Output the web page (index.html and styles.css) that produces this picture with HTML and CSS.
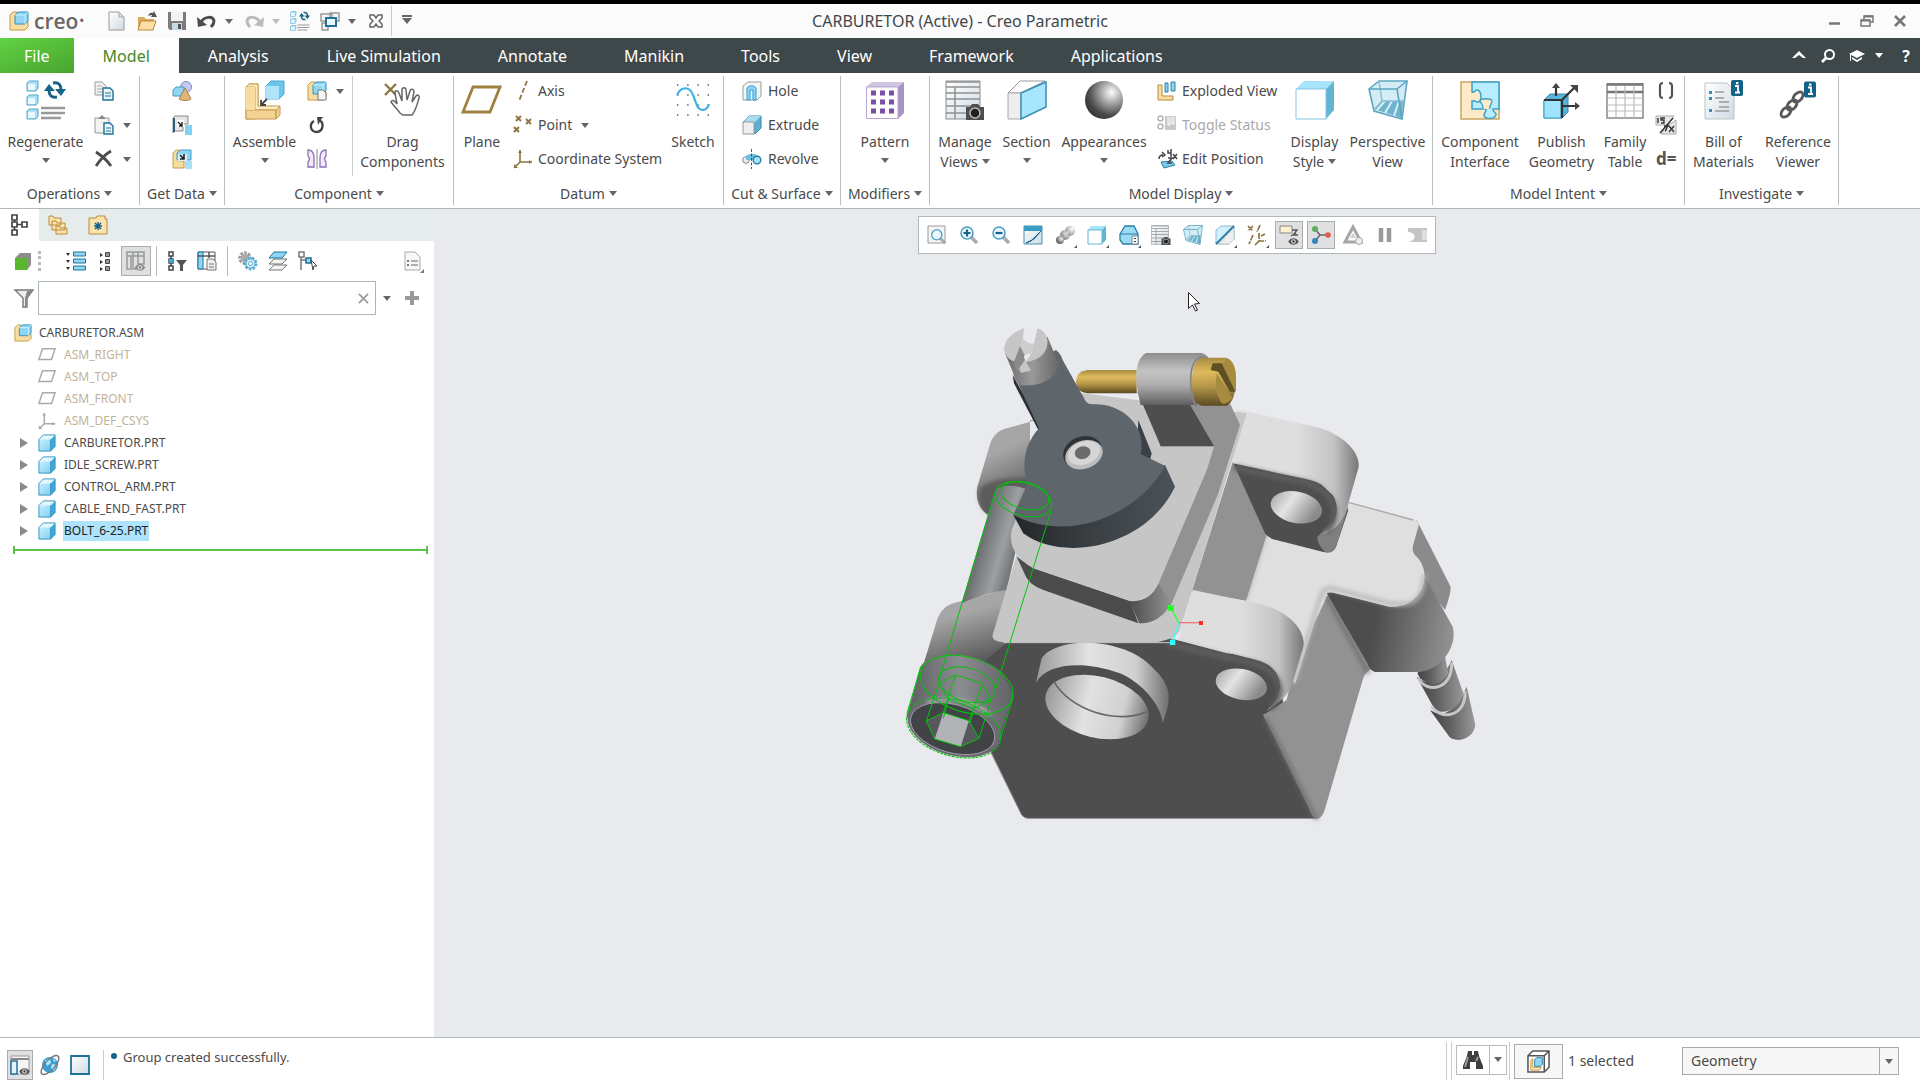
FILE: index.html
```html
<!DOCTYPE html>
<html lang="en">
<head>
<meta charset="utf-8">
<title>CARBURETOR (Active) - Creo Parametric</title>
<link rel="stylesheet" href="styles.css">
</head>
<body>
<svg class="defs" aria-hidden="true">
  <defs>
    <linearGradient id="gBlue" x1="0" y1="0" x2="1" y2="1"><stop offset="0" stop-color="#c9f0ff"/><stop offset="1" stop-color="#7fcdf0"/></linearGradient>
    <linearGradient id="gPale" x1="0" y1="0" x2="1" y2="1"><stop offset="0" stop-color="#fff"/><stop offset="1" stop-color="#cfdbe4"/></linearGradient>
    <radialGradient id="gBall" cx=".7" cy=".3" r=".8"><stop offset="0" stop-color="#fff"/><stop offset=".35" stop-color="#a8a8a8"/><stop offset=".75" stop-color="#4b4b4b"/><stop offset="1" stop-color="#333"/></radialGradient>
  </defs>
  <symbol id="part" viewBox="0 0 20 20"><path d="M1 6l5-5h13l-5 5z" fill="#e2f7ff"/><path d="M14 6l5-5v13l-5 5z" fill="#3ba9dc"/><path d="M1 6h13v13H1z" fill="url(#gBlue)"/><path d="M1 6l5-5h13v13l-5 5H1zM14 6v13" fill="none" stroke="#2f8fbd"/></symbol>
  <symbol id="asm" viewBox="0 0 20 20"><path d="M1 4l3-3h4v10h11v5l-3 3H1z" fill="#f8dda2" stroke="#c79a4b"/><path d="M6 4l3-3h10v9l-3 3H6z" fill="#8fd6f5" stroke="#2f8fbd"/><path d="M6 4h10v9M16 4l3-3" fill="none" stroke="#c9f0ff"/></symbol>
  <symbol id="plane" viewBox="0 0 20 20"><path d="M5 3h14l-4 12H1z" fill="none" stroke="#a9a9a9" stroke-width="1.6"/></symbol>
  <symbol id="csys" viewBox="0 0 20 20"><path d="M7 1v12h12M7 13l-6 6" fill="none" stroke="currentColor" stroke-width="1.6"/><path d="M5 4l2-3 2 3zM16 11l3 2-3 2zM1 15v4h4z" fill="currentColor"/></symbol>
  <symbol id="regen" viewBox="0 0 40 40"><g fill="#a8e2f8" stroke="#56a5c8"><path d="M1 3l2-2h9v7l-2 3H1zM1 17l2-2h9v7l-2 3H1zM1 31l2-2h9v7l-2 3H1z"/></g><path d="M2 4h7v6H2zM2 18h7v6H2zM2 32h7v6H2z" fill="#fff" opacity=".75"/><path d="M15 28h24M15 33h24M15 38h20" stroke="#999" stroke-width="2.4"/><path d="M27 3c6-1 8 2 8 7M31 17c-6 1-8-2-8-7" fill="none" stroke="#17648a" stroke-width="3"/><path d="M29 9h11l-5 7zM18 11h11l-6-7z" fill="#17648a"/></symbol>
  <symbol id="camtable" viewBox="0 0 40 40"><path d="M1 1h34v38H1z" fill="url(#gPale)" stroke="#8b8b8b"/><path d="M1 2h34M1 7h34M1 13h34M1 19h34M1 26h34M1 33h34M10 7v32" fill="none" stroke="#909090" stroke-width="1.5"/><path d="M21 27h4l2-3h6l2 3h4v13H21z" fill="#4d4d4d"/><circle cx="30" cy="33" r="5" fill="#1f1f1f" stroke="#bbb" stroke-width="1.5"/></symbol>
  <symbol id="persp" viewBox="0 0 40 40"><path d="M1 9l10-8h28l-5 38-28-8z" fill="#d3edf7" stroke="#5da5c0" stroke-width="1.6"/><path d="M6 29l8-8h21l-1 17z" fill="#6fb3cd"/><path d="M17 21l-8 9M24 21l-7 12M31 21l-5 15" stroke="#d7eff8" stroke-width="2"/><path d="M11 1l3 20-8 9M14 21h22" fill="none" stroke="#8abed0" stroke-width="1.4"/><path d="M1 9h28l5 30M29 9l10-8" fill="none" stroke="#5da5c0" stroke-width="1.6"/></symbol>
  <symbol id="mag" viewBox="0 0 20 20"><path d="M12 12l6 6" stroke="#aaa" stroke-width="3.5"/><circle cx="8" cy="8" r="6" fill="#e9f7fd" stroke="#4b9cc4" stroke-width="1.5"/></symbol>
  <symbol id="eye" viewBox="0 0 12 8"><path d="M0 4c3-5 9-5 12 0-3 5-9 5-12 0z" fill="#555"/><circle cx="6" cy="4" r="2.6" fill="#ddd"/><circle cx="6" cy="4" r="1.3" fill="#333"/></symbol>
  <symbol id="info" viewBox="0 0 12 16"><rect width="12" height="16" rx="2" fill="#126186"/><path d="M4 6h3v6M4 12.5h5" fill="none" stroke="#fff" stroke-width="1.8"/><path d="M5 2h2.4v2.200H5z" fill="#fff"/></symbol>
</svg>

<header class="titlebar">
  <div class="brand"><svg class="i20"><use href="#asm"/></svg><span>creo</span><sup>•</sup></div>
  <nav class="quick" aria-label="Quick access">
    <button aria-label="New"><svg class="i20" viewBox="0 0 20 20"><path d="M2 1h10l5 5v13H2z" fill="url(#gPale)" stroke="#9a9a9a"/><path d="M12 1v5h5z" fill="#cfe3ee" stroke="#aaa"/></svg></button>
    <button aria-label="Open"><svg class="i20" viewBox="0 0 20 20"><path d="M1 6h6l2 2h8v11H1z" fill="#d8ab5c"/><path d="M1 19l3-9h15l-3 9z" fill="#fbe0a6" stroke="#b98a3c"/><path d="M11 5c1-3 3-4 5-3l1-2 3 6h-6l1-2c-1 0-2 0-4 1z" fill="#555"/></svg></button>
    <button aria-label="Save"><svg class="i20" viewBox="0 0 20 20"><path d="M1 1h18v18H3l-2-2z" fill="#7b7b7b"/><path d="M4 1h12v9H4z" fill="#f3f3f3"/><path d="M5 12h10v7H5z" fill="#c3dbe7"/><path d="M11 13h3v5h-3z" fill="#555"/></svg></button>
    <button class="gap" aria-label="Undo"><svg class="i20" viewBox="0 0 20 20"><path d="M4 11c4-6 12-6 13-1 0 3-1 4-3 6" fill="none" stroke="#4c4c4c" stroke-width="3"/><path d="M0 6l1 10 9-2z" fill="#4c4c4c"/></svg><i class="caret"></i></button>
    <button class="gap dis" aria-label="Redo"><svg class="i20" viewBox="0 0 20 20"><path d="M16 11C12 5 4 5 3 10c0 3 1 4 3 6" fill="none" stroke="#bbb" stroke-width="3"/><path d="M20 6l-1 10-9-2z" fill="#bbb"/></svg><i class="caret"></i></button>
    <button aria-label="Regenerate model"><svg class="i20"><use href="#regen"/></svg></button>
    <button class="gap" aria-label="Windows"><svg class="i20" viewBox="0 0 20 20"><path d="M10 2h9v8h-9zM1 3h11v7H1zM2 12h6v7H2z" fill="#f6f6f6" stroke="#999" stroke-width="1.500"/><path d="M6 7h10v8H6z" fill="#eaf8ff" stroke="#1f7298" stroke-width="2"/></svg><i class="caret"></i></button>
    <button aria-label="Close window"><svg class="i20" viewBox="0 0 20 20"><path d="M4 4h4l2 3 2-3h4v3l-3 3 3 3v3h-4l-2-3-2 3H4v-3l3-3-3-3z" fill="#fff" stroke="#666" stroke-width="1.500"/></svg></button>
    <button class="custom" aria-label="Customize"><i class="caret bar"></i></button>
  </nav>
  <h1>CARBURETOR (Active) - Creo Parametric</h1>
  <div class="winctl">
    <button aria-label="Minimize"><svg viewBox="0 0 14 14"><path d="M2 9.500h11" stroke="#777" stroke-width="2.500"/></svg></button>
    <button aria-label="Restore"><svg viewBox="0 0 14 14"><path d="M4 5V2h9v6h-3M1 6h9v6H1z" fill="none" stroke="#777" stroke-width="1.500"/><path d="M4 2.500h9M1 6.500h9" stroke="#777" stroke-width="2"/></svg></button>
    <button aria-label="Close"><svg viewBox="0 0 14 14"><path d="M2 2l10 10M12 2L2 12" stroke="#777" stroke-width="2.600"/></svg></button>
  </div>
</header>

<nav class="tabs" aria-label="Ribbon tabs">
  <button class="file">File</button><button class="on">Model</button><button>Analysis</button><button>Live Simulation</button><button>Annotate</button><button>Manikin</button><button>Tools</button><button>View</button><button>Framework</button><button>Applications</button>
  <div class="tabctl">
    <button aria-label="Collapse ribbon"><svg viewBox="0 0 16 16"><path d="M1 10l7-7 7 7-3 0-4-3-4 3z" fill="#fff"/></svg></button>
    <button aria-label="Search"><svg viewBox="0 0 16 16"><circle cx="9.500" cy="6.500" r="4.500" fill="none" stroke="#fff" stroke-width="2"/><path d="M6 10l-4 4" stroke="#fff" stroke-width="2.600"/></svg></button>
    <button class="learn" aria-label="Learning"><svg viewBox="0 0 16 16"><path d="M0 6l8-4 8 4-8 4z" fill="#fff"/><path d="M3 9l5 3 5-3v2l-5 3-5-3zM1 7h1v6H1z" fill="#fff"/></svg><i class="caret"></i></button>
    <button class="q" aria-label="Help">?</button>
  </div>
</nav>

<section class="ribbon" aria-label="Model ribbon">
  <div class="group"><div class="tools ops">
    <button class="big"><svg><use href="#regen"/></svg><span>Regenerate</span><i class="caret"></i></button>
    <div class="col">
      <button aria-label="Copy"><svg class="i20" viewBox="0 0 20 20"><path d="M1 1h7l4 4v9H1z" fill="#f2f2f2" stroke="#999"/><path d="M3 5h5M3 8h5M3 11h5" stroke="#aaa"/><path d="M9 7h7l3 3v9H9z" fill="#e9f7fd" stroke="#1f7298" stroke-width="1.400"/><path d="M11 12h6M11 15h6" stroke="#1f7298"/></svg></button>
      <button aria-label="Paste"><svg class="i20" viewBox="0 0 20 20"><path d="M1 3h14v15H1z" fill="#f2f2f2" stroke="#999"/><path d="M4 4l4-4 4 4z" fill="#888"/><path d="M10 8h6l3 3v8h-9z" fill="#e9f7fd" stroke="#1f7298" stroke-width="1.400"/><path d="M12 13h5M12 16h5" stroke="#1f7298"/></svg><i class="caret"></i></button>
      <button aria-label="Delete"><svg class="i20" viewBox="0 0 20 20"><path d="M2 3c6 4 11 8 15 14M17 2C10 6 6 11 2 17" fill="none" stroke="#4c4c4c" stroke-width="2.800"/></svg><i class="caret"></i></button>
    </div></div><button class="name">Operations<i class="caret"></i></button></div>

  <div class="group"><div class="tools get"><div class="col">
      <button aria-label="User-defined feature"><svg class="i20" viewBox="0 0 20 20"><circle cx="14" cy="6" r="5.500" fill="#c4c8f0" stroke="#8288c6"/><path d="M1 9l3-3h8v9H1z" fill="#8fd6f5" stroke="#4a9dbf"/><path d="M13 7l6 11c-3 2-9 2-12 0z" fill="#dcb67a" stroke="#a9823f"/></svg></button>
      <button aria-label="Copy geometry"><svg class="i20" viewBox="0 0 20 20"><path d="M1 3l2-2h13v8h-5v7H3l-2 2z" fill="#e5e5e5" stroke="#888"/><path d="M1 3h2v14H1z" fill="#2f5f7a"/><path d="M5 5h7v7H5z" fill="#fff"/><path d="M6 7l4 4M10 7v4H7" stroke="#222" stroke-width="1.400" fill="none"/><path d="M13 10h7v10h-7z" fill="#7ed3f5"/></svg></button>
      <button aria-label="Shrinkwrap"><svg class="i20" viewBox="0 0 20 20"><path d="M1 4l3-3h3v11h5v7H1z" fill="#f8dda2" stroke="#c79a4b"/><path d="M5 4l3-3h11v10H5z" fill="#8fd6f5" stroke="#4a9dbf"/><path d="M6 5h9v7H6z" fill="#d8f2fd"/><path d="M8 6l4 4M12 5v5H8" stroke="#222" stroke-width="1.600" fill="none"/><path d="M13 12h7v8h-7z" fill="#a5e2fb"/></svg></button>
    </div></div><button class="name">Get Data<i class="caret"></i></button></div>

  <div class="group"><div class="tools cmp">
    <button class="big"><svg viewBox="0 0 40 40"><path d="M1 7l3-3h9v23l-3 12H1z" fill="#f3d294" stroke="#c79a4b"/><path d="M1 30h30l4-4H13V4H4L1 7h9v23" fill="#fdecc5" stroke="#c79a4b"/><path d="M1 30h30v9H1zM31 30l4-4v9l-4 4z" fill="#f3d294" stroke="#c79a4b"/><path d="M1 7h9v23H1z" fill="#f8dda2"/><path d="M21 6l5-5h13v13l-5 5H21z" fill="#6cc6ec" stroke="#4aa9d2"/><path d="M21 6h13v13H21z" fill="#aee5fb"/><path d="M22 19l-6 6M16 20v5h5" fill="none" stroke="#444" stroke-width="1.800"/></svg><span>Assemble</span><i class="caret"></i></button>
    <div class="col">
      <button aria-label="Create"><svg class="i20" viewBox="0 0 20 20"><use href="#asm"/><path d="M11 9h5l3 3v7h-8z" fill="#f4f7f9" stroke="#777"/></svg><i class="caret"></i></button>
      <button aria-label="Repeat"><svg class="i20" viewBox="0 0 20 20"><path d="M7 6c-5 3-4 11 3 11 7-1 7-10 2-12" fill="none" stroke="#444" stroke-width="2.400"/><path d="M10 2h7l-2 1-4 7z" fill="#444"/></svg></button>
      <button aria-label="Mirror"><svg class="i20" viewBox="0 0 20 20"><path d="M1 1c5 0 6 5 6 8v9H1v-5c2-2 2-4 0-6zM19 1c-5 0-6 5-6 8v9h6v-5c-2-2-2-4 0-6z" fill="#f1eaf8" stroke="#8f6fb8" stroke-width="1.300"/><path d="M10 0v20" stroke="#888"/></svg></button>
    </div>
    <button class="big ruled"><svg viewBox="0 0 40 40"><path d="M2 4l11 11M13 4L2 15" stroke="#8f7440" stroke-width="2.400"/><path d="M17 33c-3-4-6-7-9-11 1-3 4-1 6 2L12 13c0-3 3-3 4 0l3 8V10c0-3 4-3 4 0l1 10 3-9c1-3 4-2 4 1l-2 10 4-6c2-2 4 0 3 2-2 7-3 12-7 17H20z" fill="#fff" stroke="#666" stroke-width="1.500"/></svg><span>Drag<br>Components</span></button>
    </div><button class="name">Component<i class="caret"></i></button></div>

  <div class="group"><div class="tools dat">
    <button class="big"><svg viewBox="0 0 40 40"><path d="M11 7h27L28 32H1z" fill="none" stroke="#a0803e" stroke-width="2.800"/></svg><span>Plane</span></button>
    <div class="col">
      <button><svg class="i20" viewBox="0 0 20 20"><path d="M14 0L6 20" stroke="#8f7440" stroke-width="1.800" stroke-dasharray="5 2.500"/></svg>Axis</button>
      <button><svg class="i20" viewBox="0 0 20 20"><path d="M3 1l5 5M8 1L3 6M13 4l5 5M18 4l-5 5M1 12l5 5M6 12l-5 5" stroke="#8f7440" stroke-width="1.900"/></svg>Point<i class="caret"></i></button>
      <button><svg class="i20 tan"><use href="#csys"/></svg>Coordinate System</button>
    </div>
    <button class="big"><svg viewBox="0 0 40 40"><path d="M4 5h33M4 15h33M4 25h33M4 35h33" stroke="#555" stroke-width="1.400" stroke-dasharray="1.400 8.800"/><path d="M4 15C8 6 17 6 20 15l3 8c3 10 11 8 13 1" fill="none" stroke="#3fb1e6" stroke-width="2.200"/></svg><span>Sketch</span></button>
    </div><button class="name">Datum<i class="caret"></i></button></div>

  <div class="group"><div class="tools cut"><div class="col">
      <button><svg class="i20" viewBox="0 0 20 20"><path d="M1 5l5-4h13v14l-4 4H1z" fill="#f4f4f4" stroke="#999"/><path d="M5 19V7c2-3 7-3 9 0v12h-3V9H8v10z" fill="#8fd6f5" stroke="#2a9fd4"/></svg>Hole</button>
      <button><svg class="i20" viewBox="0 0 20 20"><path d="M1 7l6-6h12v12l-6 6z" fill="#5aafd2" stroke="#3e86a5"/><path d="M1 7l6-6h12l-6 6z" fill="#a8dcf0"/><path d="M1 7h11v12H1z" fill="#f0f0f0" stroke="#999"/></svg>Extrude</button>
      <button><svg class="i20" viewBox="0 0 20 20"><circle cx="4" cy="11" r="3.300" fill="#eee" stroke="#888"/><path d="M4 7c4-3 8-3 12 0v4H4z" fill="#6ebfe0"/><circle cx="15" cy="11" r="3.800" fill="#a5e2fb" stroke="#2a7ea5" stroke-width="1.400"/><path d="M9.500 0v20" stroke="#555" stroke-dasharray="3 1.500"/></svg>Revolve</button>
    </div></div><button class="name">Cut &amp; Surface<i class="caret"></i></button></div>

  <div class="group"><div class="tools mod">
    <button class="big"><svg viewBox="0 0 40 40"><path d="M1 7l6-5h32l-6 5z" fill="#cfc4e2"/><path d="M33 7l6-5v31l-6 6z" fill="#a793c7"/><path d="M1.500 7h31.500v31.500H1.500z" fill="#fff" stroke="#b7a7d0"/><path d="M6 13h24M6 22h24M6 31h24" stroke="#7b4fa3" stroke-width="5" stroke-dasharray="5 4"/></svg><span>Pattern</span><i class="caret"></i></button>
    </div><button class="name">Modifiers<i class="caret"></i></button></div>

  <div class="group"><div class="tools dsp">
    <button class="big"><svg><use href="#camtable"/></svg><span>Manage<br>Views<i class="caret"></i></span></button>
    <button class="big"><svg viewBox="0 0 40 40"><path d="M1 13L13 1h25L14 13z" fill="#fff" stroke="#999"/><path d="M1 13h13v26H1z" fill="#eee" stroke="#aaa"/><path d="M14 13L39 2v25L14 39z" fill="#a8e6fd" stroke="#3b8fb3" stroke-width="1.500"/></svg><span>Section</span><i class="caret"></i></button>
    <button class="big"><svg viewBox="0 0 40 40"><circle cx="20" cy="20" r="19" fill="url(#gBall)"/></svg><span>Appearances</span><i class="caret"></i></button>
    <div class="col">
      <button><svg class="i20" viewBox="0 0 20 20"><path d="M1 4h4v11h11v4H1z" fill="#f8dda2" stroke="#b98a3c"/><path d="M8 2h3v9H8zM14 1h4v9h-4z" fill="#8fd6f5" stroke="#2a7ea5"/></svg>Exploded View</button>
      <button class="dis"><svg class="i20" viewBox="0 0 20 20"><circle cx="3.500" cy="3.500" r="2.500" fill="none" stroke="#b5b5b5" stroke-width="1.500"/><circle cx="3.500" cy="11.500" r="2.500" fill="none" stroke="#b5b5b5" stroke-width="1.500"/><path d="M8 1h11v14H8z" fill="#c9c9c9"/><path d="M11 2v8h2V2M15 2v7h2V2" fill="none" stroke="#fff"/></svg>Toggle Status</button>
      <button><svg class="i20" viewBox="0 0 20 20"><path d="M4 13l11-1 3 4-11 3z" fill="#7ccbea" stroke="#2a7ea5"/><path d="M2 10c0-3 1-4 4-4M5 3l3 3-3 2M11 1v3h3M14 0v8M16 5l4 5M20 5l-4 5M11 9h4l-4 5h4" fill="none" stroke="#444" stroke-width="1.500"/></svg>Edit Position</button>
    </div>
    <button class="big"><svg viewBox="0 0 40 40"><path d="M1 9l8-8h30l-8 8z" fill="#a5e4fb"/><path d="M31 9l8-8v29l-8 9z" fill="#62b5d2"/><path d="M1 9h30v30H1z" fill="#fff" stroke="#81c7e0"/></svg><span>Display<br>Style<i class="caret"></i></span></button>
    <button class="big"><svg><use href="#persp"/></svg><span>Perspective<br>View</span></button>
    </div><button class="name">Model Display<i class="caret"></i></button></div>

  <div class="group"><div class="tools int">
    <button class="big"><svg viewBox="0 0 40 40"><path d="M1 2h38v37H1z" fill="#fdebc8" stroke="#c9a567" stroke-width="1.500"/><path d="M12 2h27v27h-6c-1 3 4 3 3 6-2 5-12 4-12 0 0-3 3-3 2-6H12v-8c4-1 5 3 8 0 2-3 1-11-3-11-3 0-2 3-5 2z" fill="#b8ecff" stroke="#3ba0c9" stroke-width="1.500"/><path d="M26 29c1-4-2-5-3-8 0-3 12-3 12 0 0 3-3 4-2 8" fill="#fdebc8" stroke="#3ba0c9" stroke-width="1.300" transform="translate(-3 0)"/></svg><span>Component<br>Interface</span></button>
    <button class="big"><svg viewBox="0 0 40 40"><path d="M2 20l6-6h18v18l-6 6H2z" fill="#54b6dc" stroke="#3e86a5"/><path d="M2 20h17v18H2z" fill="#9fe4fc" stroke="#3ba0c9"/><path d="M2 20h18v18M20 20L33 7M14 16V4M20 26h16" fill="none" stroke="#333" stroke-width="2.200"/><path d="M10 8l4-5 4 5zM28 5h8v8zM33 22l5 4-5 4z" fill="#444"/></svg><span>Publish<br>Geometry</span></button>
    <button class="big"><svg viewBox="0 0 40 40"><path d="M2 4h36v34H2z" fill="#fff" stroke="#888" stroke-width="1.500"/><path d="M2 4.500h36M2 12h36" stroke="#777" stroke-width="2.400"/><path d="M2 18h36M2 25h36M2 31h36M11 6v32M20 6v32M29 6v32" stroke="#bbb" stroke-width="1.200"/></svg><span>Family<br>Table</span></button>
    <div class="col">
      <button aria-label="Parameters"><svg class="i20" viewBox="0 0 20 20"><path d="M7 2Q4 2 4 5v9q0 3 3 3M13 2q3 0 3 3v9q0 3-3 3" fill="none" stroke="#555" stroke-width="2.200"/></svg></button>
      <button aria-label="Switch dimensions"><svg class="i20" viewBox="0 0 20 20"><path d="M0 1h18l-6 9H0zM20 5v14H5l5-7z" fill="#e8e8e8" stroke="#aaa"/><path d="M2 3v5M9 3H5v2h3v3H5M17 3L4 18M13 8c-2 0-2 8-4 8M8 11h5M13 11l5 6M18 11l-5 6" fill="none" stroke="#333" stroke-width="1.400"/></svg></button>
      <button aria-label="Relations"><b>d=</b></button>
    </div></div><button class="name">Model Intent<i class="caret"></i></button></div>

  <div class="group"><div class="tools inv">
    <button class="big"><svg viewBox="0 0 40 40"><path d="M1 3h22l7 7v29H1z" fill="url(#gPale)" stroke="#c0c0c0"/><path d="M11 12h9M11 18h9M15 22h10M15 27h10M11 31h14" stroke="#999" stroke-width="1.500"/><path d="M5 11h3v3H5zM5 17h3v3H5zM5 29h3v3H5z" fill="#3390b8"/><use href="#info" x="27" width="12" height="16"/></svg><span>Bill of<br>Materials</span></button>
    <button class="big"><svg viewBox="0 0 40 40"><g fill="none" stroke="#595959" stroke-width="2.800"><ellipse cx="8" cy="32" rx="6" ry="3.800" transform="rotate(-45 8 32)"/><ellipse cx="14" cy="25" rx="6" ry="3.800" transform="rotate(-45 14 25)"/><ellipse cx="20" cy="17" rx="6" ry="3.800" transform="rotate(-45 20 17)"/></g><use href="#info" x="26" y="1" width="12" height="17"/></svg><span>Reference<br>Viewer</span></button>
    </div><button class="name">Investigate<i class="caret"></i></button></div>
</section>

<main class="work">
  <aside class="side">
    <div class="sidetabs">
      <button class="on" aria-label="Model tree"><svg class="i20" viewBox="0 0 20 20"><path d="M2 0h5v5H2zM2 7h5v5H2zM2 15h5v5H2zM12 7h5v5h-5zM4.500 5v2M4.500 12v3M7 9.500h5" fill="none" stroke="#444" stroke-width="1.700"/></svg></button>
      <button aria-label="Folders"><svg class="i20" viewBox="0 0 20 20"><g fill="#fbe3ad" stroke="#b98a3c"><path d="M1 1h4l1 2h7v7H1zM4 6h4l1 2h8v7H4zM8 11h3l1 2h7v6H8z"/></g></svg></button>
      <button aria-label="Favorites"><svg class="i20" viewBox="0 0 20 20"><path d="M1 3h7l1-2h8v3h2v15H1z" fill="#fbe3ad" stroke="#b98a3c"/><path d="M10 7v8M6 11h8M7 8l6 6M13 8l-6 6" stroke="#17648a" stroke-width="1.500"/></svg></button>
    </div>
    <div class="treebar">
      <button aria-label="Model display"><svg class="i20" viewBox="0 0 20 20"><path d="M2 7l5-5h11v12l-4 5H2z" fill="#8d8d8d"/><path d="M2 7h12v12H2z" fill="#57b72f"/></svg></button>
      <span class="grip"></span>
      <button aria-label="Expand all"><svg class="i20" viewBox="0 0 20 20"><g fill="#8fd6f5" stroke="#1f7298"><path d="M7.500 1h12v4h-12zM7.500 8h12v4h-12zM7.500 15h12v4h-12z"/></g><path d="M0 2h4L2 5zM0 9h4l-2 3zM0 16h4l-2 3z" fill="#333"/></svg></button>
      <button aria-label="Collapse all"><svg class="i20" viewBox="0 0 20 20"><g fill="#999" stroke="#444"><path d="M9.500 1.500h4v4h-4zM9.500 8.500h4v4h-4zM9.500 15.500h4v4h-4z"/></g><path d="M4 2v4l3-2zM4 9v4l3-2zM4 16v4l3-2z" fill="#333"/></svg></button>
      <button class="down" aria-label="Tree columns"><svg class="i20" viewBox="0 0 20 20"><path d="M1 1h17v4H1zM1 5h4v13H1zM7 1v17h3M12 1v12h6V5" fill="none" stroke="#999" stroke-width="1.500"/><use href="#eye" x="8" y="13" width="12" height="7" opacity=".6"/></svg></button>
      <span class="sep"></span>
      <button aria-label="Tree filters"><svg class="i20" viewBox="0 0 20 20"><path d="M2 1h4v4H2zM2 8h4v4H2zM2 15h4v4H2zM4 5v3M4 12v3" fill="none" stroke="#444" stroke-width="1.500"/><path d="M2 8h4v4H2z" fill="#3ba9dc"/><path d="M9 9h11l-4 5v6h-3v-6z" fill="#555"/></svg></button>
      <button aria-label="Columns setup"><svg class="i20" viewBox="0 0 20 20"><path d="M1 1h17v17H1z" fill="#fff" stroke="#555"/><path d="M1 1h5v17H1z" fill="#8fd6f5" stroke="#1f7298"/><path d="M1 5h17M12 1v6" stroke="#555" stroke-width="1.500"/><path d="M10 8h6l3 3v8h-9z" fill="#eee" stroke="#777"/><path d="M12 13h5M12 16h5" stroke="#777"/></svg></button>
      <span class="sep"></span>
      <button aria-label="Settings"><svg class="i20" viewBox="0 0 20 20"><circle cx="7" cy="7" r="5" fill="none" stroke="#999" stroke-width="3.500" stroke-dasharray="2.500 1.200"/><circle cx="7" cy="7" r="4" fill="#aaa"/><circle cx="12.500" cy="12.500" r="5.500" fill="#e4f5fd" stroke="#57a9d0" stroke-width="2.800" stroke-dasharray="2.500 1.300"/><circle cx="12.500" cy="12.500" r="4.500" fill="#d5effa" stroke="#57a9d0"/><circle cx="12.500" cy="12.500" r="2" fill="#fff" stroke="#57a9d0"/></svg></button>
      <button aria-label="Layers"><svg class="i20" viewBox="0 0 20 20"><g stroke="#777" fill="#f4f4f4"><path d="M1 19l5-5h13l-5 5zM1 13l5-5h13l-5 5z"/></g><path d="M1 7l5-6h13l-5 6z" fill="#8fd6f5" stroke="#1f7298"/></svg></button>
      <button aria-label="Select in tree"><svg class="i20" viewBox="0 0 20 20"><path d="M1 1h5v5H1zM3 6v13M3 9h5" fill="none" stroke="#777" stroke-width="1.500"/><path d="M8 7h5v5H8z" fill="#8fd6f5" stroke="#1f7298" stroke-width="1.500"/><path d="M13 9l6 6-3 0-1 4z" fill="#fff" stroke="#444"/></svg></button>
      <button class="last" aria-label="Tree settings"><svg class="i20" viewBox="0 0 20 20"><path d="M1 1h10l5 5v13H1z" fill="#f7f7f7" stroke="#aaa"/><path d="M7 10h7M7 14h7" stroke="#999" stroke-width="1.500"/><path d="M3 9h2v2H3zM3 13h2v2H3zM20 18v4h-4z" fill="#777"/></svg></button>
    </div>
    <div class="filter">
      <svg class="i20" viewBox="0 0 20 20"><path d="M1 2h18l-6 8v9H9v-9z" fill="#f0f0f0" stroke="#777" stroke-width="1.400"/><path d="M13 3h5l-5 7v8h-2v-8z" fill="#888"/></svg>
      <div class="box"><input type="text" aria-label="Filter tree"><button aria-label="Clear"><svg viewBox="0 0 12 12"><path d="M1 1l10 10M11 1L1 11" stroke="#999" stroke-width="1.800"/></svg></button></div>
      <button aria-label="Filter options"><i class="caret"></i></button>
      <button class="plus" aria-label="Add"><svg viewBox="0 0 14 14"><path d="M7 0v14M0 7h14" stroke="#999" stroke-width="4"/></svg></button>
    </div>
    <ul class="tree">
      <li class="root"><svg><use href="#asm"/></svg><span>CARBURETOR.ASM</span></li>
      <li class="datum"><svg><use href="#plane"/></svg><span>ASM_RIGHT</span></li>
      <li class="datum"><svg><use href="#plane"/></svg><span>ASM_TOP</span></li>
      <li class="datum"><svg><use href="#plane"/></svg><span>ASM_FRONT</span></li>
      <li class="datum"><svg><use href="#csys"/></svg><span>ASM_DEF_CSYS</span></li>
      <li><button class="arrow" aria-label="Expand"></button><svg><use href="#part"/></svg><span>CARBURETOR.PRT</span></li>
      <li><button class="arrow" aria-label="Expand"></button><svg><use href="#part"/></svg><span>IDLE_SCREW.PRT</span></li>
      <li><button class="arrow" aria-label="Expand"></button><svg><use href="#part"/></svg><span>CONTROL_ARM.PRT</span></li>
      <li><button class="arrow" aria-label="Expand"></button><svg><use href="#part"/></svg><span>CABLE_END_FAST.PRT</span></li>
      <li><button class="arrow" aria-label="Expand"></button><svg><use href="#part"/></svg><span class="sel">BOLT_6-25.PRT</span></li>
    </ul>
    <div class="insert"></div>
  </aside>

  <section class="view" aria-label="Graphics area">
    <svg class="model" viewBox="434 209 1486 828" role="img" aria-label="Carburetor assembly">
      <defs>
        <linearGradient id="mHole" gradientTransform="rotate(15)"><stop offset="0" stop-color="#a2a2a2"/><stop offset=".45" stop-color="#e4e4e4"/><stop offset="1" stop-color="#8b8b8b"/></linearGradient>
        <linearGradient id="mRing"><stop offset="0" stop-color="#999"/><stop offset=".4" stop-color="#e2e2e2"/><stop offset=".75" stop-color="#d0d0d0"/><stop offset="1" stop-color="#6e6e6e"/></linearGradient>
        <linearGradient id="mLug"><stop offset=".5" stop-color="#dedede"/><stop offset=".8" stop-color="#c4c4c4"/><stop offset="1" stop-color="#777"/></linearGradient>
        <linearGradient id="mBoss" x1="600" y1="900" x2="960" y2="960" gradientUnits="userSpaceOnUse"><stop offset=".35" stop-color="#4d4d4d"/><stop offset="1" stop-color="#929292"/></linearGradient>
        <linearGradient id="mTube"><stop offset="0" stop-color="#444"/><stop offset=".4" stop-color="#5c5c5c"/><stop offset="1" stop-color="#999"/></linearGradient>
        <linearGradient id="mGold" x2="0" y2="1"><stop offset="0" stop-color="#a88b40"/><stop offset=".3" stop-color="#debb5d"/><stop offset=".6" stop-color="#b5964a"/><stop offset="1" stop-color="#594a20"/></linearGradient>
        <linearGradient id="mClamp" x2="0" y2="1"><stop offset="0" stop-color="#8d8d8d"/><stop offset=".35" stop-color="#c4c4c4"/><stop offset=".6" stop-color="#b0b0b0"/><stop offset="1" stop-color="#5f5f5f"/></linearGradient>
        <linearGradient id="mArm"><stop offset="0" stop-color="#23272a"/><stop offset=".5" stop-color="#3b4044"/><stop offset="1" stop-color="#4b525a"/></linearGradient>
        <linearGradient id="mLL" x2=".3" y2="1"><stop offset=".4" stop-color="#a6a6a6"/><stop offset="1" stop-color="#555"/></linearGradient>
        <linearGradient id="mShaft" x1="250" y1="700" x2="370" y2="735" gradientUnits="userSpaceOnUse"><stop offset="0" stop-color="#5e6063"/><stop offset=".7" stop-color="#9da0a3"/><stop offset="1" stop-color="#777a7d"/></linearGradient>
        <linearGradient id="mHead"><stop offset="0" stop-color="#5c5e60"/><stop offset=".5" stop-color="#8a8c8f"/><stop offset="1" stop-color="#606265"/></linearGradient>
        <linearGradient id="mKnob"><stop offset="0" stop-color="#6b6b6b"/><stop offset=".5" stop-color="#9a9a9a"/><stop offset="1" stop-color="#666"/></linearGradient>
        <linearGradient id="mCorner"><stop offset="0" stop-color="#4b4b4b"/><stop offset="1" stop-color="#929292"/></linearGradient>
        <filter id="soft" x="-20%" y="-20%" width="140%" height="140%"><feGaussianBlur stdDeviation="6"/></filter>
      </defs>
      <g transform="translate(890 310) scale(.33333)">
        <!-- housing, front and side faces -->
        <path d="M240 1060L350 985H840L1010 1030L1110 1040L1170 1090L1180 1190L1120 1215L1275 1505Q1290 1525 1270 1525H415Q403 1525 395 1515L305 1330z" fill="#4e4e4e"/>
        <path d="M240 1200L395 1515Q403 1525 415 1525H1280" fill="none" stroke="#8a8a8a" stroke-width="3"/>
        <g transform="translate(720 60)">
          <!-- side face and outlet boss -->
          <path d="M495 1000L600 780L735 1015Q705 1020 698 1050L584 1440Q576 1466 560 1466Q545 1462 540 1440L400 1155L470 1110z" fill="#929292"/>
          <path d="M590 800L715 1030M405 1160L535 1420Q550 1460 562 1466" stroke="#6c6c6c" stroke-width="10" fill="none" filter="url(#soft)"/>
          <path d="M860 570L962 770Q963 790 945 840L880 760L845 665z" fill="#8b8b8b"/>
          <path d="M900 1140Q960 1180 1010 1070L1036 1185Q1030 1225 985 1230Q965 1228 958 1220z" fill="url(#mTube)"/>
          <path d="M860 1040Q920 1090 965 990L1000 1090Q980 1150 930 1145L915 1140z" fill="url(#mTube)"/>
          <path d="M862 1030L900 990L945 980L955 1030Q920 1085 870 1045z" fill="url(#mTube)"/>
          <path d="M865 1045C890 1092 968 1080 965 998M905 1128C930 1172 1010 1162 1005 1083" fill="none" stroke="#c6c6c6" stroke-width="9"/>
          <path d="M585 780L780 830L885 740L968 890C985 950 930 1025 860 1026H735Q718 1020 712 1000z" fill="url(#mBoss)"/>
          <!-- top of housing -->
          <path d="M655 515L850 568Q870 574 865 590L848 650Q846 668 860 680C910 730 880 835 780 830L610 788Q585 785 578 800L495 1062L350 810L410 615z" fill="#dfdfdf"/>
          <path d="M882 735C880 830 830 826 770 818L610 776Q585 766 572 800L492 1055" fill="none" stroke="#b8b8b8" stroke-width="12" filter="url(#soft)"/>
          <path d="M405 615L345 810" stroke="#b8b8b8" stroke-width="12" filter="url(#soft)"/>
          <path d="M655 517L850 570" stroke="#aaa" stroke-width="4"/>
          <path d="M310 390L410 615L348 812L185 785z" fill="#929292"/>
          <!-- rear lug -->
          <path d="M308 395L560 450L655 540L618 650Q610 672 580 666L430 628Q412 622 405 610z" fill="#4e4e4e"/>
          <path d="M562 620L655 530L618 650Q610 670 585 666Q560 640 562 620z" fill="#808080"/>
          <path d="M318 238L555 290C640 310 695 370 685 415L655 520C645 575 610 603 580 612C640 570 640 470 530 448L308 400z" fill="url(#mLug)"/>
          <path d="M312 412L520 456C610 478 640 550 590 608" fill="none" stroke="#5e5e5e" stroke-width="16" filter="url(#soft)"/>
          <ellipse cx="499" cy="532" rx="78" ry="47" transform="rotate(12 499 532)" fill="url(#mHole)"/>
          <!-- front lug -->
          <path d="M188 780L390 822C470 840 530 900 520 950L492 1045C480 1100 440 1120 410 1142C475 1090 460 1005 370 988L145 930z" fill="url(#mLug)"/>
          <path d="M110 940L350 996C440 1012 480 1075 422 1138" fill="none" stroke="#5e5e5e" stroke-width="16" filter="url(#soft)"/>
          <ellipse cx="334" cy="1063" rx="78" ry="46" transform="rotate(12 334 1063)" fill="url(#mHole)"/>
        </g>
        <!-- left lugs -->
        <path d="M440 330L350 355Q308 366 298 410L262 530C255 570 270 600 295 615L420 620V330z" fill="url(#mLL)"/>
        <path d="M268 540Q290 500 420 505V630L300 612Q262 590 268 540z" fill="#5c5c5c" filter="url(#soft)"/>
        <path d="M360 835L190 880Q148 892 135 950L95 1080L240 1090L360 990z" fill="url(#mLL)"/>
        <path d="M316 540Q350 515 420 540L350 840Q280 850 215 880z" fill="url(#mShaft)"/>
        <!-- mounting face -->
        <path d="M575 250L1070 310L870 960Q862 985 800 997H345Q303 995 308 975L380 735L365 660L420 520z" fill="#c6c6c6"/>
        <path d="M340 998H840" stroke="#ccc" stroke-width="3"/>
        <path d="M972 405L1020 280L1050 345L985 550L845 880Q810 940 750 940L720 870L800 830L950 480z" fill="#929292"/>
        <path d="M380 740L430 775L720 873L745 940L460 840Q420 825 408 800z" fill="#4b4b4b"/>
        <path d="M718 872Q775 875 805 820L842 880Q810 942 748 940z" fill="url(#mCorner)"/>
        <path d="M575 250L750 275L972 410L950 480L806 820Q780 878 720 873L430 775Q350 730 365 660L420 560z" fill="#c6c6c6"/>
        <!-- idle screw and clamp -->
        <path d="M765 260L990 230L1048 345L972 410H812z" fill="#929292"/>
        <path d="M742 245L880 250L972 408H812z" fill="#4e4e4e"/>
        <path d="M740 180H592Q558 185 558 215T592 250H740z" fill="url(#mGold)"/>
        <path d="M768 129H935Q960 135 955 160L920 285L752 285Q735 220 740 180Q745 140 768 129z" fill="url(#mClamp)"/>
        <path d="M952 142Q900 130 902 220Q905 275 920 290" fill="none" stroke="#858585" stroke-width="5"/>
        <path d="M935 143H1005Q1040 150 1038 210Q1036 275 1010 287H935Q905 280 906 215T935 143z" fill="url(#mGold)"/>
        <path d="M1010 144Q1038 155 1038 210V245L990 170zM980 190L1028 265Q1010 285 995 280Q970 245 980 190z" fill="#a68b40"/>
        <path d="M968 160H995L1036 245H1020L985 185L962 180z" fill="#5e4f24"/>
        <!-- control arm -->
        <path d="M745 330L785 430L780 450L740 430z" fill="#3a4046"/>
        <path d="M370 615L400 670C520 760 770 710 855 530L825 465L700 480z" fill="url(#mArm)"/>
        <path d="M368 195L372 220L445 360L452 345z" fill="#2b3034"/>
        <path d="M370 190L498 120Q512 130 518 150L585 270Q592 284 610 283C700 280 770 350 752 432L826 468C740 620 530 700 370 615C400 550 412 530 410 510C395 460 405 400 447 355z" fill="#5e666c"/>
        <ellipse cx="578" cy="427" rx="60" ry="47" transform="rotate(-20 578 427)" fill="#2f3437"/>
        <ellipse cx="582" cy="434" rx="58" ry="42" transform="rotate(-20 582 434)" fill="#bdbdbd"/>
        <ellipse cx="582" cy="429" rx="50" ry="34" transform="rotate(-20 582 429)" fill="#d6d6d6"/>
        <ellipse cx="578" cy="428" rx="24" ry="19" transform="rotate(-15 578 428)" fill="#6b6b6b"/>
        <!-- cable end -->
        <path d="M345 130L472 80L506 160C510 200 450 235 390 225Q375 215 370 190z" fill="url(#mKnob)"/>
        <path d="M402 55Q345 75 342 118Q345 145 374 155L404 100V55zM442 55Q468 62 472 90C476 120 455 150 408 156L425 130z" fill="#c6c6c6"/>
        <path d="M402 57L442 56L425 130L408 156L392 120L398 88z" fill="#e8eaee"/>
        <path d="M398 85L390 108L404 135L423 130L432 100Q415 105 398 85z" fill="#cdcdcd"/>
        <path d="M390 108L404 135L388 185L378 180L372 155z" fill="#8a8a8a"/><path d="M405 150L423 182L392 188L388 175z" fill="#c6c6c6"/>
        <!-- intake bore -->
        <g transform="translate(0 690)">
          <path d="M438 428L455 355C500 290 690 290 780 375C845 435 848 470 818 550C815 500 760 430 690 400C580 360 470 370 438 428z" fill="url(#mRing)"/>
          <ellipse cx="621" cy="501" rx="158" ry="92" transform="rotate(14 621 501)" fill="url(#mRing)"/>
          <path d="M492 425C540 510 680 555 770 515" fill="none" stroke="#666" stroke-width="5"/>
        </g>
        <!-- highlighted bolt -->
        <path d="M92 1070C120 1015 330 1010 370 1155L325 1290Q180 1330 50 1220z" fill="url(#mHead)"/>
        <ellipse cx="192" cy="1252" rx="143" ry="84" transform="rotate(16 192 1252)" fill="#6a6a70"/>
        <path d="M110 1175Q220 1155 300 1215" fill="none" stroke="#e6e6ea" stroke-width="6" filter="url(#soft)"/>
        <ellipse cx="188" cy="1256" rx="130" ry="72" transform="rotate(16 188 1256)" fill="#414346" stroke="#b9b4cc" stroke-width="2"/>
        <path d="M160 1208L237 1232L267 1285L212 1310L134 1287L109 1233z" fill="#56585b"/>
        <path d="M160 1208L237 1232L212 1310L134 1287z" fill="#b2b3b6"/>
        <g fill="none" stroke="#00c408" stroke-width="3">
          <ellipse cx="405" cy="557" rx="73" ry="40" transform="rotate(14 405 557)"/>
          <ellipse cx="400" cy="568" rx="87" ry="49" transform="rotate(16 400 568)"/>
          <path d="M316 545L147 1110M484 600L317 1135"/>
          <ellipse cx="230" cy="1124" rx="143" ry="82" transform="rotate(16 230 1124)"/>
          <ellipse cx="231" cy="1124" rx="87" ry="50" transform="rotate(16 231 1124)"/>
          <ellipse cx="191" cy="1254" rx="145" ry="84" transform="rotate(16 191 1254)" stroke-dasharray="9 3"/>
          <path d="M92 1070L51 1210M370 1160L330 1290M197 1095L277 1120L302 1172L252 1195L175 1168L147 1120zM160 1208L237 1232L267 1285L212 1310L134 1287L109 1233zM197 1095L160 1208M277 1120L237 1232M302 1172L267 1285M147 1120L109 1233M175 1168L160 1225M252 1195L240 1240"/>
        </g>
        <!-- coordinate axes -->
        <g fill="none" stroke-width="4"><path d="M843 894L866 938" stroke="#3f3"/><path d="M866 938H930" stroke="#e77"/><path d="M866 938L848 995" stroke="#3ff"/></g>
        <path d="M834 885h18v18h-18z" fill="#2bff2b"/><path d="M927 933h12v12h-12z" fill="#ff2b2b"/><path d="M840 989h16v16h-16z" fill="#2bffff"/>
      </g>
      <path d="M1188.500 292.500v16l4-3.500 3 6 2-1-3-6 5-.500z" fill="#fff" stroke="#222"/>
    </svg>
    <div class="gbar" role="toolbar" aria-label="Graphics toolbar">
      <button aria-label="Refit"><svg class="i20" viewBox="0 0 20 20"><path d="M1 1h17v17H1z" fill="#f5f5f5" stroke="#999"/><use href="#mag" x="3" y="3" width="17" height="17"/></svg></button>
      <button aria-label="Zoom in"><svg class="i20" viewBox="0 0 20 20"><use href="#mag"/><path d="M4.500 8h7M8 4.500v7" stroke="#17648a" stroke-width="2.200"/></svg></button>
      <button aria-label="Zoom out"><svg class="i20" viewBox="0 0 20 20"><use href="#mag"/><path d="M4.500 8h7" stroke="#17648a" stroke-width="2.200"/></svg></button>
      <button aria-label="Repaint"><svg class="i20" viewBox="0 0 20 20"><path d="M1 1h18v18H1z" fill="url(#gPale)" stroke="#4b8fae"/><path d="M1 1h18v5H1z" fill="#3b9cc4"/><path d="M18 6L8 16l-5 2 8-4z" fill="#17648a" stroke="#17648a"/></svg></button>
      <button aria-label="Rendering"><svg class="i20" viewBox="0 0 20 20"><circle cx="15" cy="6" r="5" fill="url(#gBall)" opacity=".5"/><circle cx="10" cy="10" r="5" fill="url(#gBall)" opacity=".6"/><circle cx="5" cy="15" r="4" fill="url(#gBall)" opacity=".8"/><path d="M22 20v3h-3z" fill="#555"/></svg></button>
      <button aria-label="Display style"><svg class="i20" viewBox="0 0 20 20"><path d="M1 5l4-4h14v14l-4 4H1z" fill="#62b5d2"/><path d="M1 5l4-4h14l-4 4z" fill="#a5e4fb"/><path d="M1 5h14v14H1z" fill="#fff" stroke="#62b5d2"/><path d="M22 20v3h-3z" fill="#555"/></svg></button>
      <button aria-label="Saved orientations"><svg class="i20" viewBox="0 0 20 20"><path d="M1 9l5-8h9l4 8v10H4l-3-4z" fill="#9bdcf5" stroke="#2a7ea5" stroke-width="1.300"/><path d="M1 9h18" fill="none" stroke="#2a7ea5"/><path d="M13 11h6v8h-6z" fill="#fff" stroke="#888"/><path d="M15 13h2v1h-2zM15 16h2v1h-2z" fill="#333"/><path d="M22 20v3h-3z" fill="#555"/></svg></button>
      <button aria-label="View manager"><svg class="i20"><use href="#camtable"/></svg></button>
      <button aria-label="Perspective"><svg class="i20"><use href="#persp"/></svg></button>
      <button aria-label="Section"><svg class="i20" viewBox="0 0 20 20"><path d="M1 5l5-4h13v13l-5 5H1z" fill="#d5effa" stroke="#8abed0"/><path d="M19 2v13l-5 4H4z" fill="#eee" stroke="#aaa" stroke-dasharray="1 1"/><path d="M1 19L19 1" stroke="#2a7ea5" stroke-width="1.800"/><path d="M22 20v3h-3z" fill="#555"/></svg></button>
      <button aria-label="Datum display"><svg class="i20" viewBox="0 0 20 20"><path d="M1 1l5 5M6 1L1 6M13 0l-3 7M6 10l-4 9M12 8v8h7M12 16l-4 4M14 11l4-2" fill="none" stroke="#8f7440" stroke-width="1.700" stroke-dasharray="6 1"/><path d="M22 20v3h-3z" fill="#555"/></svg></button>
      <button class="down" aria-label="Annotation display"><svg class="i20" viewBox="0 0 20 20"><path d="M1 1h12v7H1z" fill="#fdf1cf" stroke="#888"/><path d="M13 5h5l-3 4M14 10h5M12 11l5-3" fill="none" stroke="#555" stroke-width="1.400"/><use href="#eye" x="9" y="13" width="11" height="7"/></svg></button>
      <button class="down" aria-label="Spin center"><svg class="i20" viewBox="0 0 20 20"><path d="M4 4l5 6-5 6M9 10h8" fill="none" stroke="#666" stroke-width="1.500"/><circle cx="4" cy="4" r="3" fill="#5fae5a"/><circle cx="17" cy="10" r="2.800" fill="#e05a4e"/><circle cx="4" cy="16" r="3" fill="#3289bb"/></svg></button>
      <button aria-label="Simulate"><svg class="i20" viewBox="0 0 20 20"><path d="M10 2l8 15H2z" fill="none" stroke="#a5a5a5" stroke-width="3"/><path d="M10 8l3 5H7z" fill="#ccc"/><circle cx="16" cy="16" r="3.500" fill="#eee" stroke="#aaa"/></svg></button>
      <button aria-label="Pause"><svg class="i20" viewBox="0 0 20 20"><path d="M6 3v14M14 3v14" stroke="#9a9a9a" stroke-width="4.500"/></svg></button>
      <button aria-label="Results"><svg class="i20" viewBox="0 0 20 20"><path d="M1 3h19v14H1c8-1 10-9 0-10z" fill="#c4c4c4"/><path d="M15 5h5v10h-5z" fill="#dedede"/></svg></button>
    </div>
  </section>
</main>

<footer class="status">
  <button class="down" aria-label="Show navigator"><svg class="i20" viewBox="0 0 20 20"><path d="M1 1h18v18H1z" fill="#f5f5f5" stroke="#999"/><path d="M1 4h18" stroke="#888" stroke-width="2"/><path d="M1 6h6v13H1z" fill="#e3f5fc" stroke="#1f7298" stroke-width="1.500"/><use href="#eye" x="9" y="13" width="11" height="7"/></svg></button>
  <button aria-label="Show browser"><svg class="i20" viewBox="0 0 20 20"><circle cx="10" cy="10" r="8" fill="#3c9ed1"/><path d="M5 5l5-1 1 4-4 3zM12 9l5 1-3 6-3-3zM13 3l3 3-2 1z" fill="#b5e3f8"/><ellipse cx="10" cy="10" rx="12" ry="5" transform="rotate(-48 10 10)" fill="none" stroke="#777" stroke-width="1.400"/></svg></button>
  <button aria-label="Full screen"><svg class="i20" viewBox="0 0 20 20"><path d="M1 1h18v18H1z" fill="url(#gPale)" stroke="#1f7298" stroke-width="1.800"/></svg></button>
  <p><i></i>Group created successfully.</p>
  <div class="right">
    <span class="rule"></span><span class="rule"></span>
    <div class="find"><button aria-label="Find"><svg class="i20" viewBox="0 0 20 20"><path d="M5 1h4v4h2V1h4l1 5 4 10v3h-7v-7H7v7H0v-3L4 6z" fill="#3f3f3f"/><path d="M5 7l-3 10M15 7l-2 4" stroke="#999" stroke-width="2"/></svg></button><button aria-label="Find options"><i class="caret"></i></button></div>
    <span class="rule"></span>
    <button class="selbtn" aria-label="Selection"><svg viewBox="0 0 24 24"><path d="M1 6l5-5h17v17l-5 5H1zM1 6h17v17M18 6l5-5" fill="#fff" stroke="#555" stroke-width="1.600"/><path d="M4 11l2-2v9h9l-2 3H4z" fill="#fbe3ad" stroke="#c79a4b"/><path d="M8 10l2-2h6v7l-2 2H8z" fill="#8fd6f5" stroke="#2a7ea5"/></svg></button>
    <output>1 selected</output>
    <div class="picker"><select aria-label="Selection filter"><option>Geometry</option></select><i class="caret"></i></div>
  </div>
</footer>
</body>
</html>
```
FILE: styles.css
```css
* { box-sizing: border-box; }

body {
  margin: 0;
  min-height: 100vh;
  display: flex;
  flex-direction: column;
  border-top: 4px solid #000;
  background: #fff;
  color: #4a4a4a;
  font: 14px/20px "Noto Sans", "Open Sans", sans-serif;
}

.defs { position: absolute; width: 0; height: 0; }

button {
  margin: 0;
  padding: 0;
  border: 0;
  background: none;
  color: inherit;
  font: inherit;
  display: flex;
  align-items: center;
}

svg { display: block; flex: none; overflow: visible; }
.i20 { width: 20px; height: 20px; }

.caret {
  display: inline-block;
  flex: none;
  border: 4px solid transparent;
  border-top: 5px solid #666;
  border-bottom: 0;
}
.dis { color: #aaa; }
.dis .caret { border-top-color: #bbb; }
.down { background: #dfe0e2; border: 1px solid #a8adad; }

/* title bar */
.titlebar {
  display: grid;
  grid-template-columns: 1fr auto 1fr;
  align-items: center;
  height: 34px;
  background: #fbfbfb;
}
.brand { grid-column: 1; grid-row: 1; display: flex; align-items: center; gap: 5px; padding-left: 9px; color: #666; font: 600 21px/28px "Open Sans", sans-serif; }
.brand sup { font-size: 12px; margin-left: -4px; line-height: 8px; }
.quick { grid-column: 1; grid-row: 1; display: flex; align-items: center; gap: 10px; padding-left: 107px; }
.quick .gap { gap: 8px; }
.quick .gap + .gap { margin-left: 1px; }
.quick .custom { height: 30px; margin-left: -5px; padding-left: 10px; border-left: 1px solid #ccc; }
.bar { position: relative; border-width: 6px 5px 0; }
.bar::before { content: ""; position: absolute; left: -5px; top: -9px; width: 10px; height: 2px; background: #666; }
.titlebar h1 { grid-column: 2; grid-row: 1; margin: 0; font-size: 16px; font-weight: 400; line-height: 24px; color: #3f474a; }
.winctl { grid-column: 3; grid-row: 1; justify-self: end; display: flex; gap: 19px; padding-right: 13px; }
.winctl svg { width: 14px; height: 14px; }

/* tabs */
.tabs { display: flex; height: 35px; background: #3e474a; color: #fff; font-size: 16px; }
.tabs > button { padding: 0 29px; }
.tabs > button:nth-child(n + 5) { padding-left: 28px; }
.tabs > .file { padding: 0 24px; background: linear-gradient(160deg, #62d244, #48a42f); }
.tabs > .on { background: #fff; color: #3f8a28; }
.tabctl { margin-left: auto; display: flex; align-items: center; gap: 13px; padding-right: 10px; }
.tabctl svg { width: 16px; height: 16px; }
.tabctl .learn { gap: 10px; }
.tabctl .caret { border-top-color: #fff; }
.tabctl .q { font-weight: 700; padding-left: 6px; }

/* ribbon */
.ribbon { display: flex; height: 136px; border-bottom: 1px solid #afb9bc; background: #fff; }
.group {
  display: flex;
  flex-direction: column;
  padding: 1px 1px 0 0;
  background: linear-gradient(#b9c1c3, #b9c1c3) right 3px / 1px 129px no-repeat;
}
.tools { display: grid; height: 102px; }
.ops { grid-template-columns: 91px 48px; }
.get { grid-template-columns: 84px; }
.cmp { grid-template-columns: 79px 48px 101px; }
.dat { grid-template-columns: 56px 153px 60px; }
.cut { grid-template-columns: 116px; }
.mod { grid-template-columns: 88px; }
.dsp { grid-template-columns: 70px 53px 102px 131px 57px 89px; }
.int { grid-template-columns: 94px 69px 58px 30px; }
.inv { grid-template-columns: 77px 72px; padding-right: 4px; }

.big { flex-direction: column; padding-top: 6px; white-space: nowrap; text-align: center; }
.big > svg { width: 40px; height: 40px; margin-bottom: 12px; }
.big > .caret { margin-top: 6px; }
.big span .caret { margin: 0 0 3px 4px; }
.ruled { background: linear-gradient(#c8cecf, #c8cecf) left 2px / 1px 100px no-repeat; }
.col { display: grid; grid-template-rows: repeat(3, 34px); white-space: nowrap; }
.col button { gap: 5px; padding-left: 3px; }
.col .caret { margin-left: 4px; }
.get .col button { padding-left: 32px; }
.cut .col button { padding-left: 18px; gap: 6px; }
.dsp .col button { padding-left: 2px; }
.int .col button { padding-left: 2px; }
.col b { font: 700 17px/24px "Noto Sans", sans-serif; color: #555; }
.tan { color: #8f7440; }
.name { justify-content: center; gap: 4px; height: 32px; padding-top: 3px; }

/* work area */
.work { flex: 1; display: flex; }
.side { width: 434px; flex: none; background: #fff; }
.sidetabs { display: flex; height: 32px; background: #e6ebeb; }
.sidetabs button { width: 40px; padding-right: 3px; justify-content: center; }
.sidetabs .on { background: #fff; width: 39px; padding: 0; }

.treebar { display: flex; align-items: center; height: 40px; padding: 0 5px 0 8px; }
.treebar button { width: 30px; height: 30px; justify-content: center; flex: none; }
.grip { width: 6px; height: 20px; margin-right: 17px; border-left: 3px dotted #bbb; }
.treebar .sep { width: 1px; height: 30px; margin: 0 5px; background: #bbb; }
.treebar .last { margin-left: auto; }

.filter { display: flex; align-items: center; padding: 0 15px 0 14px; height: 34px; gap: 4px; }
.box { flex: 1; height: 34px; display: flex; align-items: center; border: 1px solid #a9b7b5; padding-right: 6px; }
.box input { flex: 1; min-width: 0; height: 30px; border: 0; outline: 0; padding: 0 6px; font: inherit; background: none; }
.box svg { width: 11px; height: 11px; }
.filter button { padding: 0 0 0 3px; }
.box button { padding: 0; }
.plus svg { width: 14px; height: 14px; }
.filter .plus { padding-left: 10px; }

.tree { list-style: none; margin: 7px 0 0; padding: 0; font-size: 12px; line-height: 20px; }
.tree li { display: flex; align-items: center; height: 22px; padding-left: 38px; gap: 7px; }
.tree li svg { width: 18px; height: 18px; }
.tree li span { padding: 0 1px; }
.tree .root { padding-left: 14px; gap: 6px; }
.tree .datum { color: #bfb39b; }
.tree .datum svg { color: #a9a9a9; }
.arrow { width: 8px; margin: 0 3px 0 -18px; border: 5px solid transparent; border-left: 8px solid #8a8a8a; border-right: 0; }
.tree .sel { background: #aee3fc; color: #222; }
.insert { height: 8px; margin: 4px 6px 0 13px; border: solid #5cc04a; border-width: 0 2px; background: linear-gradient(#5cc04a, #5cc04a) center / 100% 2px no-repeat; }

.view { flex: 1; position: relative; background: #e8eaee; min-width: 0; }
.model { position: absolute; inset: 0; width: 100%; height: 100%; }
.gbar {
  position: relative;
  display: flex;
  gap: 4px;
  width: max-content;
  margin: 7px auto 0;
  padding: 4px;
  border: 1px solid #afb9bc;
  background: #fff;
}
.gbar button { width: 28px; height: 28px; justify-content: center; }

/* status bar */
.status { display: flex; align-items: center; height: 43px; border-top: 1px solid #afb9bc; padding: 0 21px 0 7px; background: #fff; }
.status > button { width: 30px; height: 30px; margin-top: 11px; justify-content: center; }
.status > .down { width: 26px; margin-right: 2px; }
.status p { display: flex; align-items: center; gap: 6px; margin: 0 0 0 8px; padding: 0 0 16px 7px; height: 30px; align-self: flex-end; border-left: 1px solid #ccc; font-size: 13px; line-height: 16px; }
.status p i { width: 6px; height: 6px; border-radius: 3px; background: #17648a; margin-bottom: 2px; }
.right { margin-left: auto; display: flex; align-items: center; align-self: stretch; gap: 2px; padding-top: 4px; }
.rule { width: 3px; height: 38px; border-left: 1px solid #ccc; }
.find { display: flex; height: 30px; margin-bottom: 3px; border: 1px solid #bbb; }
.find button { padding: 0 6px; }
.find button + button { padding: 0 4px; border-left: 1px solid #bbb; }
.selbtn { width: 49px; height: 35px; justify-content: center; border: 1px solid #aaa; background: #f7f7f7; }
.selbtn svg { width: 23px; height: 23px; }
.right output { width: 115px; padding-left: 3px; }
.picker { display: flex; align-items: center; height: 28px; width: 217px; border: 1px solid #aaa; background: #f7f7f7; }
.picker select { flex: 1; height: 26px; padding: 0 8px; border: 0; border-right: 1px solid #aaa; appearance: none; background: none; color: inherit; font: inherit; }
.picker .caret { margin: 0 5px; }
```
